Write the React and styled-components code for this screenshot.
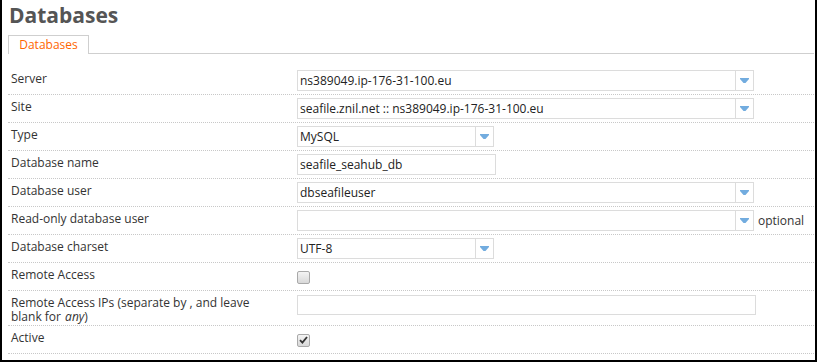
import React from "react";
import styled, { createGlobalStyle } from "styled-components";

const GlobalStyle = createGlobalStyle`
  html, body {
    margin: 0;
    padding: 0;
    background: #fff;
  }
  body {
    font-family: "Open Sans", "DejaVu Sans", sans-serif;
    font-size: 12px;
    color: #333;
  }
`;

const rows = [
  { label: "Server", kind: "select", value: "ns389049.ip-176-31-100.eu", size: "wide" },
  { label: "Site", kind: "select", value: "seafile.znil.net :: ns389049.ip-176-31-100.eu", size: "wide" },
  { label: "Type", kind: "select", value: "MySQL", size: "short" },
  { label: "Database name", kind: "input", value: "seafile_seahub_db", size: "short" },
  { label: "Database user", kind: "select", value: "dbseafileuser", size: "wide" },
  { label: "Read-only database user", kind: "select", value: "", size: "wide", note: "optional" },
  { label: "Database charset", kind: "select", value: "UTF-8", size: "short" },
  { label: "Remote Access", kind: "check", checked: false },
  {
    label: (
      <>
        Remote Access IPs (separate by , and leave blank for <em>any</em>)
      </>
    ),
    kind: "input",
    value: "",
    size: "full",
  },
  { label: "Active", kind: "check", checked: true },
];

const Arrow = () => (
  <svg width="9" height="5" viewBox="0 0 9 5">
    <path d="M0 0 H9 V1 L5.5 5 H3.5 L0 1 Z" fill="#72acdf" />
  </svg>
);

const Check = () => (
  <svg width="9" height="8" viewBox="0 0 9 8">
    <path d="M1 4.2 L3.4 6.6 L8 1" fill="none" stroke="#333" strokeWidth="1.8" />
  </svg>
);

const Field = ({ row }) => {
  if (row.kind === "check") {
    return <Box>{row.checked && <Check />}</Box>;
  }
  if (row.kind === "input") {
    return <TextInput $size={row.size}>{row.value}</TextInput>;
  }
  return (
    <Select $size={row.size}>
      <SelectValue>{row.value}</SelectValue>
      <ArrowCell>
        <Arrow />
      </ArrowCell>
    </Select>
  );
};

const App = () => {
  return (
    <Frame>
      <GlobalStyle />
      <Title>Databases</Title>
      <Tabs>
        <Tab>Databases</Tab>
      </Tabs>
      <Form>
        {rows.map((row, i) => (
          <Row key={i}>
            <Label>{row.label}</Label>
            <FieldCell>
              <Field row={row} />
              {row.note && <Note>{row.note}</Note>}
            </FieldCell>
          </Row>
        ))}
      </Form>
    </Frame>
  );
};

export default App;

const Frame = styled.div`
  width: 817px;
  height: 362px;
  box-sizing: border-box;
  border: 2px solid #000;
  border-top: none;
  overflow: hidden;
`;

const Title = styled.h1`
  margin: 0;
  padding: 1px 0 0 7px;
  font-size: 21px;
  line-height: 28px;
  font-weight: 700;
  color: #555;
`;

const Tabs = styled.div`
  display: flex;
  margin: 6px 1px 0 6px;
  border-bottom: 1px solid #cfcfcf;
`;

const Tab = styled.div`
  width: 79px;
  height: 18px;
  line-height: 18px;
  border: 1px solid #cfcfcf;
  border-bottom: none;
  text-align: center;
  color: #ff6600;
  font-size: 12px;
  margin-bottom: -1px;
  background: #fff;
`;

const Form = styled.div`
  margin: 13px 1px 0 6px;
`;

const Row = styled.div`
  display: grid;
  grid-template-columns: 289px 1fr;
  align-items: start;
  min-height: 28px;
  box-sizing: border-box;
  border-bottom: 1px dotted #c8c8c8;
`;

const Label = styled.div`
  max-width: 248px;
  padding: 5px 0 1px 3px;
  line-height: 14px;
  color: #333;
  em {
    font-style: italic;
    padding-left: 1px;
  }
`;

const FieldCell = styled.div`
  display: flex;
  align-items: center;
  gap: 4px;
  padding: 3px 0;
  min-height: 21px;
`;

const widths = { wide: "457px", short: "197px", full: "459px" };

const Select = styled.div`
  display: flex;
  width: ${(p) => widths[p.$size]};
  height: 21px;
  box-sizing: border-box;
  border: 1px solid #dcdcdc;
  background: #fff;
`;

const SelectValue = styled.div`
  flex: 1;
  padding-left: 2px;
  line-height: 19px;
  color: #222;
  white-space: nowrap;
  overflow: hidden;
`;

const ArrowCell = styled.div`
  width: 17px;
  border-left: 1px solid #dcdcdc;
  display: flex;
  align-items: center;
  justify-content: center;
`;

const TextInput = styled.div`
  width: ${(p) => (p.$size === "full" ? "459px" : "199px")};
  height: ${(p) => (p.$size === "full" ? "20px" : "21px")};
  box-sizing: border-box;
  border: 1px solid #dcdcdc;
  padding-left: 2px;
  line-height: 19px;
  color: #222;
`;

const Box = styled.div`
  width: 13px;
  height: 13px;
  box-sizing: border-box;
  margin-top: 1px;
  border: 1px solid #a9a9a9;
  border-radius: 2px;
  background: linear-gradient(#f4f4f4, #d8d8d8);
  display: flex;
  align-items: center;
  justify-content: center;
`;

const Note = styled.span`
  color: #333;
`;
